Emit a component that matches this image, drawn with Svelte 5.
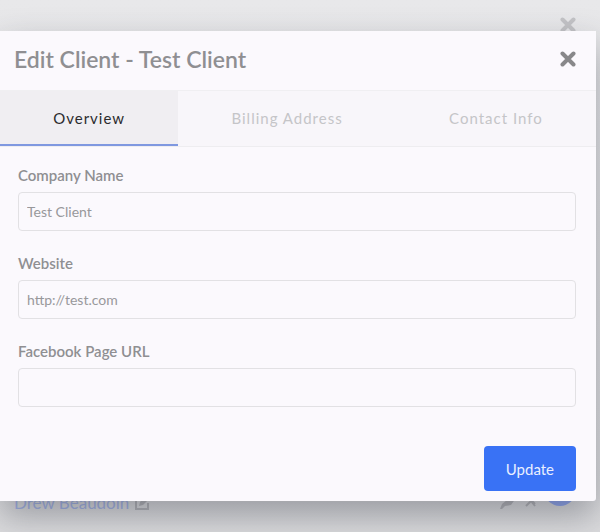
<script lang="ts">
	let active = $state('Overview');
	let company = $state('Test Client');
	let website = $state('http://test.com');
	let facebook = $state('');

	const tabs = ['Overview', 'Billing Address', 'Contact Info'];
</script>

<div class="screen">
	<!-- Page under the modal -->
	<div class="page">
		<button class="close close--faded" aria-label="Close page">
			<svg viewBox="0 0 16 16"><path d="M2.5 2.5l11 11M13.5 2.5l-11 11" /></svg>
		</button>
		<div class="client-row">
			<a href="#client">Drew Beaudoin</a>
			<svg class="edit-icon" viewBox="0 0 16 16">
				<path d="M9 1H2v14h12V9" fill="none" stroke="currentColor" stroke-width="2" />
				<path d="M5 12l1-4 7-7 3 3-7 7z" fill="currentColor" />
			</svg>
			<div class="row-actions">
				<svg class="edit-icon" viewBox="0 0 16 16">
					<path d="M0 15l2-5 5-4 4-6 5 4-5 7-6 1-3 3z" fill="currentColor" />
				</svg>
				<svg class="edit-icon" viewBox="0 0 16 16">
					<path d="M4 12l5-5 4 5M5 2l8 8" fill="none" stroke="currentColor" stroke-width="2" />
				</svg>
				<span class="avatar"></span>
			</div>
		</div>
	</div>

	<div class="modal" role="dialog" aria-labelledby="modal-title">
		<header class="modal__header">
			<h2 id="modal-title">Edit Client - Test Client</h2>
			<button class="close" aria-label="Close">
				<svg viewBox="0 0 16 16"><path d="M2.5 2.5l11 11M13.5 2.5l-11 11" /></svg>
			</button>
		</header>

		<div class="tabs" role="tablist">
			{#each tabs as tab}
				<button
					class="tab"
					class:tab--active={active === tab}
					role="tab"
					aria-selected={active === tab}
					onclick={() => (active = tab)}
				>
					{tab}
				</button>
			{/each}
		</div>

		<form class="form" onsubmit={(e) => e.preventDefault()}>
			<div class="field">
				<label for="company">Company Name</label>
				<input id="company" type="text" bind:value={company} />
			</div>
			<div class="field">
				<label for="website">Website</label>
				<input id="website" type="text" bind:value={website} />
			</div>
			<div class="field">
				<label for="facebook">Facebook Page URL</label>
				<input id="facebook" type="text" bind:value={facebook} />
			</div>
			<button class="update" type="submit">Update</button>
		</form>
	</div>
</div>

<style>
	:global(body) {
		background: #d6d6d9;
	}

	.screen {
		position: relative;
		box-sizing: border-box;
		min-height: 100vh;
		padding: 31px 4px 31px 0;
		overflow: hidden;
		background: linear-gradient(#e8e8ea, #dcdcde);
		font-family: Lato, 'Liberation Sans', sans-serif;
		color: #8f8f92;
	}

	button,
	input {
		font-family: inherit;
	}

	.page {
		position: absolute;
		inset: 0 4px 0 0;
		display: flex;
		flex-direction: column;
		justify-content: space-between;
		padding: 17px 20px 18px 14px;
	}

	.client-row {
		display: flex;
		align-items: center;
		gap: 5px;
		height: 24px;
		font-size: 17px;
		color: #b4b4b8;
	}

	.client-row a {
		color: #a3b3e6;
		text-decoration: none;
	}

	.edit-icon {
		width: 16px;
		height: 16px;
	}

	.row-actions {
		display: flex;
		align-items: center;
		gap: 6px;
		margin-left: auto;
	}

	.avatar {
		width: 32px;
		height: 32px;
		margin: 0 0 24px;
		border-radius: 50%;
		background: #8fa5f0;
	}

	.modal {
		position: relative;
		border-radius: 0 0 3px 0;
		background: #fbf9fd;
		box-shadow: 0 15px 35px rgba(50, 54, 68, 0.4);
	}

	.modal__header {
		display: flex;
		align-items: center;
		justify-content: space-between;
		box-sizing: border-box;
		height: 60px;
		padding: 0 20px 3px 14px;
		border-bottom: 1px solid #f0eff2;
	}

	h2 {
		margin: 0;
		font-size: 23px;
		font-weight: 600;
		line-height: 28px;
	}

	.close {
		display: flex;
		align-self: flex-end;
		padding: 0;
		border: 0;
		background: none;
		color: #88888a;
		cursor: pointer;
	}

	.modal__header .close {
		align-self: center;
	}

	.close--faded {
		color: #c3c3c6;
	}

	.close svg {
		width: 16px;
		height: 16px;
		fill: none;
		stroke: currentColor;
		stroke-width: 4;
		stroke-linecap: round;
	}

	.tabs {
		display: flex;
		border-bottom: 1px solid #eeedf0;
		background: #f8f6fa;
	}

	.tab {
		flex: 1 1 auto;
		height: 55px;
		padding: 0;
		border: 0;
		border-bottom: 2px solid transparent;
		background: none;
		color: #c5c5c8;
		font-size: 15px;
		letter-spacing: 1px;
		cursor: pointer;
	}

	.tab--active {
		border-bottom-color: #7f98e0;
		background: #f0eef2;
		color: #2b2b2e;
	}

	.form {
		display: flex;
		flex-direction: column;
		gap: 22px;
		padding: 18px 20px 10px 18px;
	}

	.field {
		display: flex;
		flex-direction: column;
		gap: 7px;
	}

	label {
		font-size: 15px;
		font-weight: 600;
		line-height: 20px;
	}

	input {
		box-sizing: border-box;
		width: 100%;
		height: 39px;
		padding: 0 8px;
		border: 1px solid #e2e1e4;
		border-radius: 4px;
		background: transparent;
		color: #98989b;
		font-size: 14px;
	}

	.update {
		align-self: flex-end;
		height: 45px;
		margin-top: 17px;
		padding: 0 22px;
		border: 0;
		border-radius: 4px;
		background: #3972f5;
		color: #e9efff;
		font-size: 15px;
		cursor: pointer;
	}
</style>
